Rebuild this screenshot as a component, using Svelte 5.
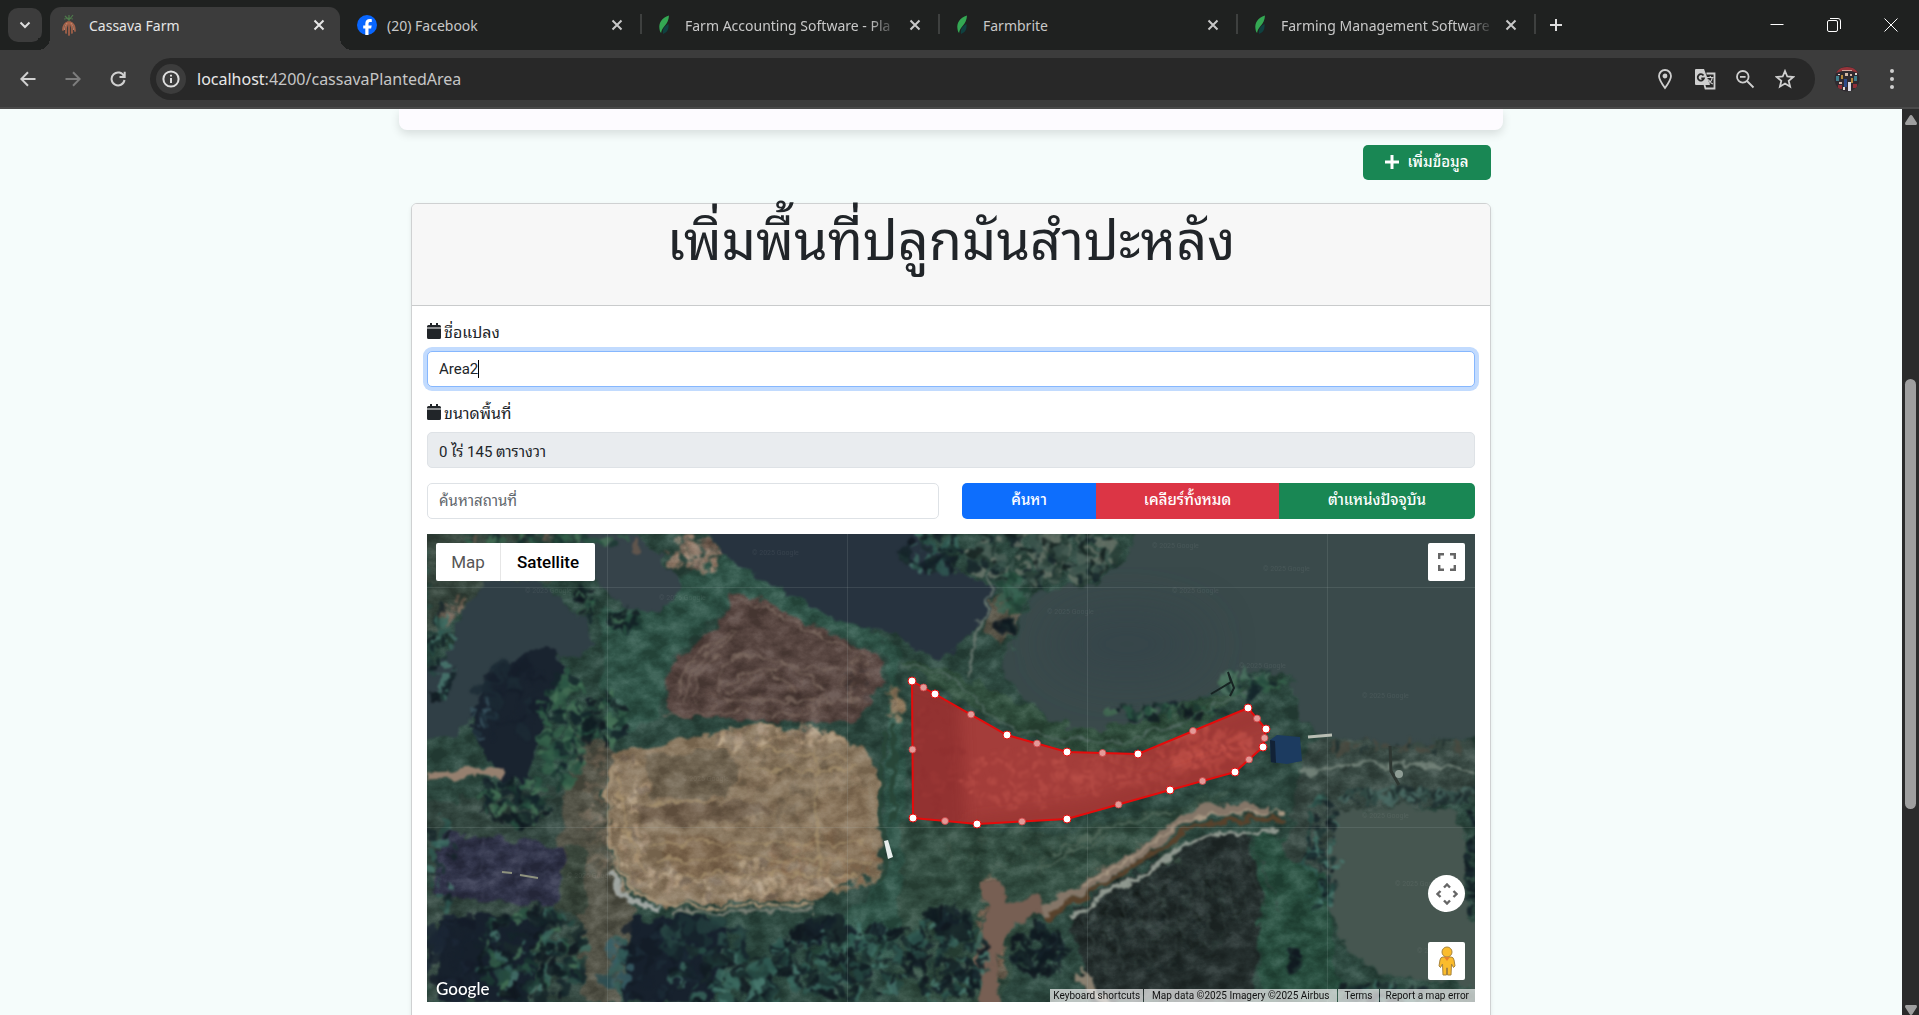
<script>
  const tabs = [
    { title: 'Cassava Farm', icon: 'cassava', active: true },
    { title: '(20) Facebook', icon: 'facebook' },
    { title: 'Farm Accounting Software - Pla', icon: 'leaf', faded: true },
    { title: 'Farmbrite', icon: 'leaf' },
    { title: 'Farming Management Software', icon: 'leaf', faded: true }
  ];

  let areaName = $state('Area2');
  let areaSize = $state('0 ไร่ 145 ตารางวา');
  let place = $state('');

  // Plot corners on the 1048 x 468 map canvas.
  const corners = [
    [485, 147], [508, 160], [580, 201], [640, 218], [711, 220], [821, 174], [839, 195],
    [836, 213], [808, 238], [743, 256], [640, 285], [550, 290], [486, 284]
  ];
  const outline = corners.map((p) => p.join(',')).join(' ');
  const middles = corners.map((p, i) => {
    const q = corners[(i + 1) % corners.length];
    return [(p[0] + q[0]) / 2, (p[1] + q[1]) / 2];
  });

  let seed = 17;
  function rnd() {
    seed = (seed * 16807) % 2147483647;
    return seed / 2147483647;
  }
  // Scatters small blobs inside an ellipse.
  function scatter(cx, cy, rx, ry, n, size, colors) {
    return Array.from({ length: n }, () => {
      const a = rnd() * 6.283;
      const d = Math.sqrt(rnd());
      return {
        x: Math.round(cx + Math.cos(a) * d * rx),
        y: Math.round(cy + Math.sin(a) * d * ry),
        r: 1 + rnd() * size,
        s: 1 + rnd() * size,
        c: colors[Math.floor(rnd() * colors.length)]
      };
    });
  }
  const dark = ['#0f1a20', '#15222a', '#1a2a2c', '#10181f'];
  const teal = ['#2f5a52', '#3c6a60', '#274a44', '#4a7a70', '#142328', '#1d3533', '#101a20'];
  const green = ['#35604a', '#2b5543', '#477357', '#1c3a32', '#14262a'];
  const sand = ['#a5907a', '#b09a7e', '#93806a', '#807060', '#bba78b'];
  const trees = [
    ...scatter(30, 425, 30, 45, 50, 10, ['#17212d', '#1b2736', '#141c28']),
    ...scatter(105, 420, 55, 48, 210, 6, [...teal, ...green, ...dark]),
    ...scatter(225, 430, 35, 45, 40, 10, ['#17212d', '#1b2a36', '#131c26']),
    ...scatter(275, 405, 45, 22, 60, 8, ['#24403f', '#1d3336', '#2a4a46', '#17242c']),
    ...scatter(300, 445, 55, 35, 150, 6, [...teal, ...dark]),
    ...scatter(190, 435, 14, 28, 24, 7, ['#35605c', '#3a6068', '#2c4c50']),
    ...scatter(420, 425, 75, 40, 330, 5, [...teal, ...dark]),
    ...scatter(395, 395, 30, 14, 40, 7, dark),
    ...scatter(518, 425, 42, 44, 170, 5, [...teal, ...dark]),
    ...scatter(520, 385, 20, 16, 40, 6, dark),
    ...scatter(85, 165, 30, 40, 50, 9, ['#19232f', '#1c2a35', '#151e2a']),
    ...scatter(55, 185, 14, 22, 30, 4, ['#3a5560', '#223440', '#19232f']),
    ...scatter(137, 195, 26, 58, 170, 5, green),
    ...scatter(178, 185, 22, 28, 60, 5, [...dark, ...green]),
    ...scatter(88, 268, 38, 22, 110, 5, [...green, ...dark]),
    ...scatter(12, 125, 14, 50, 50, 5, teal),
    ...scatter(160, 70, 12, 16, 30, 4, [...green, ...dark]),
    ...scatter(196, 88, 14, 14, 40, 5, [...green, ...dark]),
    ...scatter(15, 330, 14, 50, 30, 5, teal),
    ...scatter(505, 16, 30, 22, 70, 5, [...teal, ...dark]),
    ...scatter(615, 22, 75, 28, 300, 5, ['#4d6259', '#6a766a', '#2a4038', '#16262a', '#3b544c', '#15201f']),
    ...scatter(585, 60, 14, 22, 40, 5, ['#28503f', '#1f4034', '#3a6454']),
    ...scatter(580, 92, 8, 8, 20, 4, dark),
    ...scatter(740, 177, 62, 7, 60, 4, [...dark, ...green]),
    ...scatter(825, 150, 34, 14, 55, 4, [...green, '#4f7564']),
    ...scatter(612, 418, 27, 26, 110, 5, dark),
    ...scatter(895, 320, 16, 60, 100, 4, teal),
    ...scatter(975, 262, 80, 8, 90, 4, ['#4a6a64', '#1c2b2c', '#2f4a45']),
    ...scatter(975, 212, 70, 6, 40, 4, ['#1f2f30', '#3b4b44', '#4a4a40']),
    ...scatter(1046, 330, 6, 55, 40, 4, dark),
    ...scatter(955, 462, 50, 14, 50, 5, [...dark, ...teal]),
    ...scatter(865, 425, 6, 10, 20, 4, dark),
    ...scatter(120, 8, 100, 8, 60, 5, [...green, '#6b5a4e'])
  ];
  const soil = [
    ...scatter(200, 290, 20, 70, 90, 4, sand),
    ...scatter(315, 345, 110, 20, 240, 4, sand),
    ...scatter(350, 205, 70, 12, 110, 4, sand),
    ...scatter(360, 260, 80, 55, 200, 6, ['#8d7b64', '#84735c', '#99866c', '#786a56']),
    ...scatter(400, 330, 60, 30, 80, 5, ['#8d7257', '#957d62', '#806a54']),
    ...scatter(265, 20, 28, 16, 60, 4, ['#8d7666', '#a48c79', '#6f5c50']),
    ...scatter(25, 75, 14, 12, 20, 3, ['#8d7666', '#77665a']),
    ...scatter(170, 280, 12, 70, 80, 4, ['#6f6556', '#7a6f60', '#565648', '#4c5247']),
    ...scatter(563, 400, 14, 60, 70, 5, ['#8a6d5c', '#7a6152', '#957866']),
    ...scatter(468, 165, 9, 20, 30, 4, ['#9c856a', '#82705c']),
    ...scatter(430, 150, 16, 22, 40, 3, ['#6b5850', '#76635a', '#4d4240']),
    ...scatter(340, 160, 70, 25, 60, 3, ['#68544c', '#503f3b', '#5f4c45']),
    ...scatter(735, 380, 80, 60, 260, 3, ['#34423f', '#1f2a2a', '#2f3c3a', '#19211f']),
    ...scatter(640, 320, 120, 20, 80, 4, ['#3a5246', '#2c463a', '#42594c'])
  ];
  const crop = [
    ...scatter(600, 245, 70, 30, 200, 3, ['#7c6a60', '#6e5e56', '#8c766a', '#5e5450']),
    ...scatter(700, 240, 70, 20, 160, 3, ['#7c6a60', '#6e5e56', '#8c766a']),
    ...scatter(780, 215, 50, 22, 180, 3, ['#a48070', '#957464', '#b08c7c']),
    ...scatter(510, 220, 24, 60, 90, 4, ['#3d3c3c', '#353536', '#4c4544'])
  ];
  const rows = Array.from({ length: 15 }, (_, i) => i);
  const watermarks = [
    [98, 59], [232, 66], [325, 21], [725, 14], [836, 37], [745, 59], [812, 134], [935, 164],
    [935, 284], [968, 352], [990, 419], [255, 247], [140, 344], [620, 80]
  ];
</script>

<div class="browser">
  <header class="chrome">
    <div class="strip">
      <button class="search-tabs" aria-label="Search tabs">
        <svg width="12" height="12" viewBox="0 0 12 12"><path d="M1.500 3.500 6 8l4.500-4.500" class="thick" /></svg>
      </button>
      <nav class="tabs" aria-label="Tabs">
        {#each tabs as tab, i}
          <div class="tab" class:ruled={i > 0}>
            <div class="tab-body" class:active={tab.active}>
              {#if tab.icon === 'cassava'}
                <svg class="fav" width="20" height="24" viewBox="0 0 20 24">
                  <path d="M10 8V2M10 7 6 3M10 7l4-5M10 5 5 6M10 5l4 1" stroke="#4e7a4b" stroke-width="1.200" fill="none" />
                  <path d="M9 9C6 10 4 13 4 17M9 9c-2 4-2.500 7-2 11M10 9v13M11 9c2 4 2.500 7 2 11M11 9c3 1 5 4 5 9" stroke="#a8634a" stroke-width="1.700" fill="none" stroke-linecap="round" />
                  <path d="M8 10c-1.500 2.500-2.500 4-2.500 7M12 10c1.500 2.500 2.500 4 2.500 7" stroke="#d8967a" stroke-width=".8" fill="none" />
                </svg>
              {:else if tab.icon === 'facebook'}
                <svg class="fav" width="20" height="20" viewBox="0 0 20 20">
                  <circle cx="10" cy="10" r="10" fill="#0866ff" />
                  <path d="M8.300 20v-6.600H6.200v-3h2.100V9c0-3.300 1.500-4.900 4.600-4.900.6 0 1.400.1 1.900.2V7c-.3 0-.7-.1-1.300-.1-1.500 0-2 .6-2 2v1.500h3.200l-.6 3h-2.600V20z" fill="#fff" />
                </svg>
              {:else}
                <svg class="fav" width="20" height="20" viewBox="0 0 20 20">
                  <path d="M14 .5C6.500 3 3.500 8 4.500 14c.2 2 .8 3 1.600 4C6.500 12 13.500 10 14 .5z" fill="#34a853" />
                  <path d="M13.500 9c-4 2-6.500 5-5.500 10 4-1.500 6-4.500 5.500-10z" fill="#0f4140" />
                </svg>
              {/if}
              <span class="title" class:faded={tab.faded}>{tab.title}</span>
              <button class="close" aria-label="Close tab">
                <svg width="12" height="12" viewBox="0 0 12 12"><path d="m1.500 1.500 9 9m0-9-9 9" /></svg>
              </button>
            </div>
          </div>
        {/each}
        <button class="new-tab" aria-label="New tab">
          <svg width="14" height="14" viewBox="0 0 14 14"><path d="M7 1v12M1 7h12" /></svg>
        </button>
      </nav>
      <div class="window">
        <button aria-label="Minimize"><svg width="14" height="14" viewBox="0 0 14 14"><path d="M.5 6.500h13" class="thin" /></svg></button>
        <button aria-label="Restore">
          <svg width="14" height="16" viewBox="0 0 14 16"><rect x=".5" y="3.500" width="10" height="11" rx="1.500" class="thin" /><path d="M3 1.500h8q2.500 0 2.500 2.500v8" class="thin" /></svg>
        </button>
        <button aria-label="Close window"><svg width="14" height="14" viewBox="0 0 14 14"><path d="m.5.5 13 13m0-13-13 13" class="thin" /></svg></button>
      </div>
    </div>

    <div class="toolbar">
      <div class="nav">
        <button aria-label="Back"><svg width="16" height="16" viewBox="0 0 16 16"><path d="M15.500 8H1.500M8 1.300 1.300 8 8 14.700" /></svg></button>
        <button aria-label="Forward" class="off"><svg width="16" height="16" viewBox="0 0 16 16"><path d="M.5 8h14M8 1.300 14.700 8 8 14.700" /></svg></button>
        <button aria-label="Reload"><svg width="16" height="16" viewBox="0 0 16 16"><path d="M14 5.200A6.500 6.500 0 1 0 14.500 9M14.700.8v5.200H9.500" /></svg></button>
      </div>
      <div class="omnibox">
        <button class="info" aria-label="Site information">
          <svg width="18" height="18" viewBox="0 0 18 18"><circle cx="9" cy="9" r="7.600" /><path d="M9 8v5M9 4.800v1.600" /></svg>
        </button>
        <div class="url">localhost<span>:4200/cassavaPlantedArea</span></div>
        <div class="actions">
          <button aria-label="Location"><svg width="20" height="22" viewBox="0 0 20 22"><path d="M10 20C6 14.500 4 11 4 8a6 6 0 0 1 12 0c0 3-2 6.500-6 12z" /><circle cx="10" cy="8" r="1.500" class="solid" /></svg></button>
          <button aria-label="Translate">
            <svg width="22" height="22" viewBox="0 0 22 22"><path d="M2 1h8l6 16H2q-1 0-1-1V2q0-1 1-1z" class="solid" stroke="none" /><path d="M12.500 5.500h8v15h-9L10.500 17" /><path d="M13 9.500h6.500M16.300 8v1.500M18.300 9.500c-.5 3-2 5-4.500 6.500M14.300 11.500c1 2 2.500 3.500 4.500 4.500" stroke-width="1.200" /><path d="M9.500 7.500A3.200 3.200 0 1 0 10 10.300H7.300" class="cut" /></svg>
          </button>
          <button aria-label="Zoom"><svg width="20" height="20" viewBox="0 0 20 20"><circle cx="7.800" cy="7.800" r="5.800" /><path d="m12 12 6.500 6.500M5 7.800h5.600" /></svg></button>
          <button aria-label="Bookmark"><svg width="20" height="20" viewBox="0 0 20 20"><path d="m10 2 2.300 5.500 6 .5-4.600 3.900 1.400 5.800L10 14.600l-5.100 3.100 1.400-5.800L1.700 8l6-.5z" /></svg></button>
        </div>
      </div>
      <button class="profile" aria-label="Profile">
        <svg width="26" height="26" viewBox="0 0 26 26">
          <clipPath id="face"><circle cx="13" cy="13" r="12.500" /></clipPath>
          <g clip-path="url(#face)">
            <rect width="26" height="26" fill="#2f2a30" />
            <path d="M4 3q9-4 18 0l2 4Q13 2 2 7z" fill="#96343a" /><path d="M8 4h10v1H8z" fill="#d9a9a0" />
            <path d="M2 10h3v5H2zM20 10h3v5h-3z" fill="#3f7f8c" /><path d="M7 9h2v4H7zM17 12h2v5h-2z" fill="#b8893c" />
            <path d="M11 7h3v3h-3zM5 16h3v2H5zM16 8h2v2h-2z" fill="#d3b9a8" /><path d="M14 16h3v9h-3z" fill="#dcdce6" /><path d="M10 13h3v8h-3z" fill="#2d4b88" />
            <path d="M4 19h4v4H4zM19 18h4v4h-4z" fill="#8f2f38" /><path d="M21 7h2v2h-2zM4 8h2v1H4zM9 21h2v3H9z" fill="#dfd8d0" />
          </g>
        </svg>
      </button>
      <button class="menu" aria-label="Menu"><svg width="6" height="22" viewBox="0 0 6 22"><circle cx="3" cy="3" r="2" /><circle cx="3" cy="11" r="2" /><circle cx="3" cy="19" r="2" /></svg></button>
    </div>
  </header>

  <div class="viewport">
    <main class="page">
      <div class="container">
        <section class="upper"></section>
        <div class="content">
          <div class="add-row">
            <button class="add">
              <svg width="14" height="14" viewBox="0 0 14 14"><path d="M7 0v14M0 7h14" /></svg>
              เพิ่มข้อมูล
            </button>
          </div>
          <section class="card">
            <header><h1>เพิ่มพื้นที่ปลูกมันสำปะหลัง</h1></header>
            <div class="body">
              {#snippet calendar()}
                <svg width="14" height="16" viewBox="0 0 14 16"><path d="M3 0h2v2h4V0h2v2h1.500Q14 2 14 3.500V4.500H0V3.500Q0 2 1.500 2H3zM0 5.500h14v9q0 1.500-1.500 1.500h-11Q0 16 0 14.500z" /></svg>
              {/snippet}
              <label for="name">{@render calendar()} ชื่อแปลง</label>
              <div class="field">
                <input id="name" class="current" bind:value={areaName} />
                <i class="caret"></i>
              </div>
              <label for="size">{@render calendar()} ขนาดพื้นที่</label>
              <div class="field"><input id="size" class="fixed" readonly bind:value={areaSize} /></div>
              <div class="search">
                <input aria-label="ค้นหาสถานที่" placeholder="ค้นหาสถานที่" bind:value={place} />
                <div class="group">
                  <button class="blue">ค้นหา</button>
                  <button class="red">เคลียร์ทั้งหมด</button>
                  <button class="green">ตำแหน่งปัจจุบัน</button>
                </div>
              </div>

              <div class="map">
                <svg class="imagery" viewBox="0 0 1048 468" preserveAspectRatio="xMidYMid slice" aria-hidden="true">
                  <defs>
                    <filter id="rough" x="0" y="0" width="100%" height="100%" color-interpolation-filters="sRGB">
                      <feTurbulence type="fractalNoise" baseFrequency="0.06" numOctaves="4" seed="4" />
                      <feDisplacementMap in="SourceGraphic" scale="18" xChannelSelector="R" yChannelSelector="G" />
                      <feGaussianBlur stdDeviation="0.8" />
                    </filter>
                    <filter id="grain" x="0" y="0" width="100%" height="100%" color-interpolation-filters="sRGB">
                      <feTurbulence type="fractalNoise" baseFrequency="0.05 0.07" numOctaves="5" seed="9" />
                      <feColorMatrix values="1.800 0 0 0 -.45  1.800 0 0 0 -.45  1.800 0 0 0 -.45  0 0 0 0 1" />
                    </filter>
                    <filter id="soft" x="-40%" y="-40%" width="180%" height="180%"><feGaussianBlur stdDeviation="7" /></filter>
                    <filter id="haze" x="-60%" y="-60%" width="220%" height="220%"><feGaussianBlur stdDeviation="25" /></filter>
                    <clipPath id="plot"><polygon points={outline} /></clipPath>
                  </defs>
                  <rect width="1048" height="468" fill="#2f4a41" />
                  <g filter="url(#rough)">
                    <rect x="-20" y="-20" width="1090" height="510" fill="#2f4b42" />
                    <path d="M0 0h130l20 40-80 20L0 100z" fill="#3a4a41" />
                    <path d="M0 270 140 250l35 80v138H0z" fill="#364a43" />
                    <path d="M170 80 300 20l170 90 15 250-20 60H380l80-80V120L310 60 240 130l-10 60-50 10z" fill="#31564a" />
                    <path d="M475 285 640 300l170-45-60 40-110 70-30 20-40 90H470z" fill="#344f43" />
                    <path d="M824 301 900 300l5 130 20 38h-90z" fill="#2a5041" />
                    <path d="M880 205h168v60l-130 15-20 60-40-20z" fill="#3b4c46" />
                    <path d="M150 200 190 215 175 260l10 80 25 35-20 93h-32l-8-90-20-60z" fill="#56564a" />
                    <path d="M140 310 160 310 160 380 132 375z" fill="#3d4a3f" />
                    <path d="M473 125 520 135 640 190 820 155 760 210 640 222 500 150z" fill="#32503f" />
                    <path d="M560 70 572 62 597 82 575 112 558 100z" fill="#5d594c" />
                    <path d="M313 58 380 88 454 124V150L434 184 382 191 248 181 237 158 241 134 293 88 303 65z" fill="#5a4843" />
                    <path d="M186 218 282 200 337 190 423 204 437 218 454 244 451 338 406 348 392 368 268 368 234 374 200 348 182 308 179 258z" fill="#8c7a62" />
                    <path d="M17 298 138 311 131 374 5 361z" fill="#32354b" />
                    <path d="M643 378 776 301 817 298 835 358 832 408 820 468H665z" fill="#26302f" />
                  </g>
                  <g filter="url(#rough)">
                    {#each soil as b}
                      <ellipse cx={b.x} cy={b.y} rx={b.r} ry={b.s} fill={b.c} opacity=".75" />
                    {/each}
                  </g>
                  <g filter="url(#rough)">
                    <path d="M218 222 300 214 312 240 300 264 222 264z" fill="#6c6250" opacity=".85" />
                    <path d="M205 270 330 268 345 280 280 290 215 288z" fill="#6b5a49" opacity=".7" />
                    <path d="M235 300 300 305 314 325 290 345 240 335z" fill="#7d674e" opacity=".75" />
                    <path d="M390 265 440 250 445 330 400 325z" fill="#8a745a" opacity=".5" />
                  </g>
                  <rect width="1048" height="468" filter="url(#grain)" class="grain" />
                  <g filter="url(#rough)">
                    <path d="M55 48 96 44 124 54 141 68 169 108 141 124 113 121 79 144 45 178 27 204-20 204V151L17 124 31 91z" fill="#303f46" />
                    <path d="M145-10 215 5 248 38 255 45 238 78 200 74 172 51 155 11z" fill="#36434a" />
                    <path d="M272-10H480L500 12 545 45 566 52 560 80 540 105 525 118 510 122 485 114 470 98 423 94 372 64 303 28z" fill="#27333f" />
                    <path d="M715-20H1070V202L950 212 905 205 876 190 865 146 830 135 798 152 732 180 680 195 640 192 602 170 573 135 590 100 597 78 612 55 670 50 700 25z" fill="#3a4a4b" />
                    <path d="M910 278 985 271 1028 278 1040 311 1040 384 1060 400V455L955 438 920 421 902 374 898 325z" fill="#465650" />
                    <path d="M120 110 141 134 113 198 102 250 76 245 42 191 62 141z" fill="#19232f" />
                    <path d="M12 388 60 380 118 388 100 468H12zM205 386 260 380 300 392 290 468H195zM380 386 420 384 410 404 370 410z" fill="#17212d" />
                  </g>
                  <ellipse cx="700" cy="110" rx="80" ry="35" fill="#333f4a" opacity=".5" filter="url(#haze)" />
                  <g filter="url(#rough)" fill="none">
                    <path d="M0 241 76 238" stroke="#96806f" stroke-width="9" />
                    <path d="m615 380 50-33 48-27 28-24 40-22 60 2" stroke="#857668" stroke-width="10" />
                    <path d="m618 386 52-32 48-28 30-22 36-17 74-2" stroke="#58422c" stroke-width="5" />
                    <path d="m640 386 40-26 42-24 38-27 30-9 60-2" stroke="#8f988f" stroke-width="4" />
                    <path d="m655 350 50-26 34-26 42-18 80-1" stroke="#a89884" stroke-width="2" />
                    <path d="m562 345 12 40-14 40 4 50M572 384l44-14" stroke="#775f53" stroke-width="20" />
                    <path d="M187 232c-12 40-8 80 10 112 14 24 50 30 80 28h110" stroke="#a59277" stroke-width="3" />
                    <path d="M186 340c4 20 20 28 46 36" stroke="#a0a6a2" stroke-width="6" />
                    <path d="M245 378h140" stroke="#7f8379" stroke-width="3" />
                    <path d="M475 130 530 148 575 190 620 204 700 208 760 184 821 158" stroke="#536a62" stroke-width="2" />
                    <path d="M563 40 560 75 548 100 544 140" stroke="#66756d" stroke-width="3" />
                    <path d="M870 238 930 230 980 230 1048 237" stroke="#718077" stroke-width="3" />
                    <path d="M627 320 680 295 750 275M610 335l70-35" stroke="#506759" stroke-width="2" />
                    <path d="M650 440 680 468" stroke="#8a8070" stroke-width="9" />
                    <path d="M250 165q10-55 60-65M258 170q5-50 50-65M268 172q0-40 30-55M293 162V135q20-22 50-8l90 12M300 160l60-30 40 25M310 62l130 62M240 180h150M300 150q30-30 70 10M296 166h140" stroke="#7c6a60" stroke-width="1.500" />
                    {#each rows as i}
                      <path d="M{655 + i * 12} {372 - i * 5} l{16 + i} {75}" stroke="#394643" stroke-width="1" />
                    {/each}
                    <path d="M320 235h110M222 310h220M230 325h215M250 340h180M220 268h70M390 215v130M330 215l90 10M192 240l8 60 18 40" stroke="#a8926f" stroke-width="1.500" />
                    <path d="M14 320h118M12 340h118M60 302l-5 60M95 306l-5 62" stroke="#43465c" stroke-width="1" />
                    <path d="M456 200v150M466 190v100" stroke="#284638" stroke-width="4" />
                  </g>
                  <g filter="url(#rough)">
                    {#each trees as b}
                      <ellipse cx={b.x} cy={b.y} rx={b.r} ry={b.s} fill={b.c} opacity=".8" />
                    {/each}
                  </g>
                  <path d="m457 307 4-1 5 17-5 2z" fill="#e8eeec" />
                  <path d="M843 206 850 201 873 203 875 227 860 230 844 228z" fill="#1c3b60" /><path d="m843 206 5 1 1 22-5-1z" fill="#122236" />
                  <path d="m881 203 24-2" stroke="#b9beb4" stroke-width="3" />
                  <path d="m784 160 20-12-3-10 6 16-4 8" stroke="#172322" stroke-width="2" fill="none" />
                  <path d="m963 212 1 25 8 14" stroke="#2e3732" stroke-width="3" fill="none" /><circle cx="972" cy="240" r="4" fill="#8f9d95" />
                  <path d="m75 338 10 1m8 2 18 3" stroke="#8f937f" stroke-width="2" />
                  <path d="M180.500 0v468M420.500 0v468M660.500 0v468M900.500 0v468M0 53.500h1048M0 293.500h1048" stroke="#a6b4b4" stroke-opacity=".16" />
                  {#each watermarks as [x, y]}
                    <text {x} {y} class="mark">© 2025 Google</text>
                  {/each}
                  <g clip-path="url(#plot)">
                    <rect x="470" y="130" width="390" height="180" fill="#5c504c" />
                    <path d="M470 130h60l10 170h-70z" fill="#3a3a3a" filter="url(#soft)" />
                    <g filter="url(#rough)">
                      {#each crop as b}
                        <ellipse cx={b.x} cy={b.y} rx={b.r} ry={b.s} fill={b.c} opacity=".55" />
                      {/each}
                    </g>
                    <path d="M480 140 720 225 840 180" stroke="#3c3634" stroke-width="14" stroke-opacity=".5" fill="none" filter="url(#soft)" />
                    <path d="M540 292 660 276 820 226" stroke="#3c3634" stroke-width="14" stroke-opacity=".6" fill="none" filter="url(#soft)" />
                  </g>
                  <polygon points={outline} fill="#eb2a28" fill-opacity=".5" stroke="#e60b0b" stroke-width="2" />
                  {#each middles as [x, y]}
                    <circle cx={x} cy={y} r="3.500" fill="#e39a98" stroke="#cf3f40" stroke-width=".8" />
                  {/each}
                  {#each corners as [x, y]}
                    <circle cx={x} cy={y} r="4" fill="#fff" stroke="#e60b0b" />
                  {/each}
                </svg>

                <div class="types">
                  <button>Map</button>
                  <button class="on">Satellite</button>
                </div>
                <div class="controls">
                  <button aria-label="Toggle fullscreen view"><svg width="18" height="18" viewBox="0 0 18 18"><path d="M1.200 6V1.200H6M12 1.200h4.800V6M16.800 12v4.800H12M6 16.800H1.200V12" /></svg></button>
                  <button class="round" aria-label="Map camera controls"><svg width="22" height="22" viewBox="0 0 22 22"><path d="M8 4.500 11 1.500l3 3M8 17.500l3 3 3-3M4.500 8l-3 3 3 3M17.500 8l3 3-3 3" /></svg></button>
                  <button aria-label="Street View Pegman">
                    <svg class="peg" width="18" height="30" viewBox="0 0 18 30"><path d="M5 11q-2.500 0-3 3L1 20l1.500 1.500L4.500 18 5 29h3.500v-7h1v7H13l.5-11 2 3.500L17 20l-1-6q-.5-3-3-3z" /><circle cx="9" cy="6" r="5" /><path d="m6 11 3 4 3-4z" class="scarf" /></svg>
                  </button>
                </div>
                <a class="logo" href="#google">Google</a>
                <div class="credits">
                  <button>Keyboard shortcuts</button><span>Map data ©2025 Imagery ©2025 Airbus</span><a href="#terms">Terms</a><a href="#report">Report a map error</a>
                </div>
              </div>
            </div>
          </section>
        </div>
      </div>
    </main>
    <div class="scrollbar" aria-hidden="true">
      <svg width="12" height="10" viewBox="0 0 12 10"><path d="M6 0q1 0 1.500 1L12 8q0 2-1 2H1Q0 10 0 8l4.500-7Q5 0 6 0z" /></svg>
      <div class="track"><div class="thumb"></div></div>
      <svg width="12" height="10" viewBox="0 0 12 10"><path d="M6 10q1 0 1.500-1L12 2q0-2-1-2H1Q0 0 0 2l4.500 7q.5 1 1.500 1z" /></svg>
    </div>
  </div>
</div>

<style>
  :global(body) { margin: 0; }
  * { box-sizing: border-box; }
  button { border: 0; padding: 0; background: none; font: inherit; color: inherit; display: flex; align-items: center; justify-content: center; }
  .browser { height: 100vh; display: flex; flex-direction: column; overflow: hidden; font-family: Roboto, Tahoma, "Noto Sans Thai Looped", Loma, Waree, "Noto Sans Thai", sans-serif; font-size: 15px; color: #212529; }

  .chrome { background: #3c3c3c; color: #dedede; flex: none; border-bottom: 2px solid #4a4a4a; font-family: "Noto Sans", sans-serif; }
  .chrome svg { fill: none; stroke: currentColor; stroke-width: 2; }
  .chrome svg.fav, .chrome .profile svg { stroke: none; }
  .chrome svg .thin { stroke-width: 1; }
  .chrome svg .solid { fill: currentColor; }
  .chrome svg .cut { stroke: #282828; }
  .strip { height: 50px; background: #1f2120; display: flex; align-items: center; padding-left: 8px; }
  .search-tabs { width: 34px; height: 34px; border-radius: 10px; background: #3c3c3c; flex: none; }
  .tabs { flex: 1; min-width: 0; align-self: stretch; display: flex; align-items: center; padding-left: 8px; }
  .tab { flex: 0 1 298px; min-width: 0; height: 50px; padding: 7px 8px 0 0; position: relative; }
  .ruled::after { content: ""; position: absolute; right: 4px; top: 14px; width: 2px; height: 20px; background: #3e403f; }
  .tab-body { height: 43px; display: flex; align-items: center; padding: 0 13px 7px 9px; position: relative; color: #c8c8c8; }
  .tab-body.active { background: #3c3c3c; border-radius: 11px 11px 0 0; color: #e6e6e6; }
  .active::before, .active::after { content: ""; position: absolute; bottom: 0; width: 12px; height: 12px; }
  .active::before { left: -12px; background: radial-gradient(circle at 0 0, #1f2120 12px, #3c3c3c 12px); }
  .active::after { right: -12px; background: radial-gradient(circle at 100% 0, #1f2120 12px, #3c3c3c 12px); }
  .fav { flex: none; }
  .title { flex: 1; min-width: 0; margin: 0 8px 0 10px; font-size: 14px; line-height: 24px; padding-top: 1px; white-space: nowrap; overflow: hidden; }
  .faded { -webkit-mask-image: linear-gradient(90deg, #000 86%, transparent 100%); mask-image: linear-gradient(90deg, #000 86%, transparent 100%); }
  .close { width: 16px; height: 16px; flex: none; }
  .new-tab { width: 32px; height: 36px; flex: none; }
  .window { display: flex; flex: none; }
  .window button { width: 57px; height: 50px; color: #fff; }
  .toolbar { height: 57px; display: flex; align-items: center; padding: 0 14px 0 5px; }
  .nav { display: flex; flex: none; width: 145px; }
  .nav button { width: 45px; height: 40px; color: #d0d0d0; }
  .nav .off { color: #7d7d7d; }
  .omnibox { flex: 1; height: 42px; border-radius: 21px; background: #282828; display: flex; align-items: center; padding: 0 10px 0 6px; min-width: 0; }
  .info { width: 30px; height: 30px; border-radius: 50%; background: #3c3c3c; flex: none; }
  .url { flex: 1; min-width: 0; padding-left: 11px; font-size: 16px; line-height: 24px; color: #e8e8e8; white-space: nowrap; overflow: hidden; }
  .url span { color: #c6c6c6; }
  .actions { display: flex; color: #cfcfcf; }
  .actions button { width: 40px; height: 36px; }
  .actions svg { stroke-width: 1.800; }
  .profile { width: 64px; height: 40px; }
  .menu { width: 26px; height: 40px; color: #cfcfcf; }
  .chrome .menu svg { fill: currentColor; stroke: none; }

  .viewport { flex: 1; min-height: 0; display: flex; background: #f5fcfb; }
  .page { flex: 1; min-width: 0; overflow: hidden; }
  .container { max-width: 1104px; margin: 0 auto; }
  .upper { height: 21px; background: #fdfbff; border-radius: 0 0 8px 8px; box-shadow: 0 4px 10px rgba(0, 0, 0, .12); }
  .content { padding: 15px 12px 0; }
  .add-row { display: flex; justify-content: flex-end; margin-bottom: 23px; }
  .add { width: 128px; height: 35px; border-radius: 5px; background: #198754; color: #fff; font-weight: 500; gap: 8px; line-height: 20px; padding-bottom: 2px; }
  .add svg { stroke: #fff; stroke-width: 3; }
  .card { background: #fff; border: 1px solid #cfd1d2; border-radius: 6px; box-shadow: 0 2px 4px rgba(0, 0, 0, .08); }
  .card header { height: 102px; background: #f7f7f7; border-bottom: 1px solid #c9cbcc; border-radius: 5px 5px 0 0; text-align: center; }
  h1 { margin: 0; font-size: 54px; line-height: 76px; font-weight: 400; white-space: nowrap; }
  .body { padding: 13px 15px 24px; }
  label { display: flex; align-items: center; gap: 3px; height: 23px; margin-bottom: 9px; font-size: 16px; }
  label svg { fill: #212529; }
  input { width: 100%; height: 36px; border: 1px solid #dee2e6; border-radius: 5px; padding: 0 11px 1px; font: inherit; color: #212529; background: #fff; outline: none; min-width: 0; }
  input::placeholder { color: #5f666c; opacity: 1; }
  .field { position: relative; margin-bottom: 13px; }
  .current { border-color: #86b7fe; box-shadow: 0 0 0 4px #c2dbfe; }
  .caret { position: absolute; left: 51px; top: 9px; width: 1px; height: 18px; background: #000; }
  .fixed { background: #e9ecef; }
  .search { display: grid; grid-template-columns: 512fr 513fr; gap: 23px; margin: 15px 0; }
  .group { display: flex; height: 36px; border-radius: 5px; overflow: hidden; color: #fff; font-size: 15px; line-height: 20px; font-weight: 500; }
  .group button { white-space: nowrap; padding-bottom: 2px; }
  .blue { flex: 134; background: #0d6efd; }
  .red { flex: 183; background: #dc3545; }
  .green { flex: 196; background: #198754; }

  .map { position: relative; height: 468px; overflow: hidden; background: #2f4a41; }
  .imagery { display: block; width: 100%; height: 100%; }
  .grain { mix-blend-mode: soft-light; opacity: .36; }
  .mark { font-size: 7px; fill: #fff; fill-opacity: .07; }
  .types { position: absolute; left: 9px; top: 9px; display: flex; height: 38px; background: #fff; border-radius: 2px; font-size: 17px; color: #565656; }
  .types button { width: 64px; }
  .types .on { width: 95px; color: #000; font-weight: 500; border-left: 1px solid #e6e6e6; }
  .controls { position: absolute; right: 10px; top: 9px; bottom: 22px; display: flex; flex-direction: column; }
  .controls button { width: 37px; height: 38px; background: #fff; border-radius: 2px; }
  .controls svg { fill: none; stroke: #666; stroke-width: 2.400; }
  .controls .round { height: 37px; border-radius: 50%; margin: auto 0 30px; }
  .controls .peg { fill: #fbbc2c; stroke: #a8843c; stroke-width: 1; }
  .controls .scarf { fill: #e8812c; stroke: none; }
  .logo { position: absolute; left: 9px; bottom: 1px; color: #fff; font: 500 17px/24px Lato, sans-serif; text-decoration: none; }
  .credits { position: absolute; right: 0; bottom: 0; display: flex; height: 13px; font-size: 10px; line-height: 13px; white-space: nowrap; }
  .credits > * { padding: 0 6px; background: rgba(245, 245, 245, .7); margin-left: 1px; color: #111; text-decoration: none; }
  .credits span { padding: 0 8px; }
  .credits button { padding: 0 3px; }

  .scrollbar { width: 17px; background: #2b2b2b; display: flex; flex-direction: column; align-items: center; padding-top: 6px; flex: none; }
  .scrollbar svg { fill: #9f9f9f; flex: none; }
  .track { flex: 1; width: 11px; padding-top: 254px; }
  .thumb { height: 430px; border-radius: 6px; background: #9f9f9f; }
</style>
